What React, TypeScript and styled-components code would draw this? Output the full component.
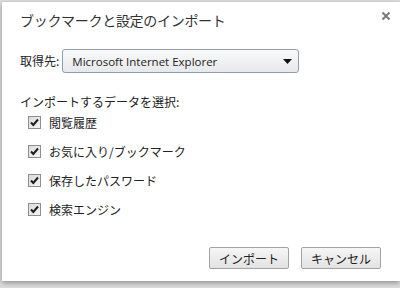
import React from 'react';
import styled, { createGlobalStyle } from 'styled-components';

const GlobalStyle = createGlobalStyle`
    html, body {
        margin: 0;
        padding: 0;
        width: 400px;
        height: 288px;
        overflow: hidden;
        background: #dcdcdc;
    }
    body {
        font-family: "Noto Sans CJK JP", "Open Sans", sans-serif;
        color: #222;
    }
`;

const Dialog = styled.div`
    margin: 2px 0 0 2px;
    width: 398px;
    height: 279px;
    background: #fff;
    box-shadow: 0 2px 5px rgba(0, 0, 0, 0.35);
    display: flex;
    flex-direction: column;
    box-sizing: border-box;
`;

const Header = styled.div`
    display: flex;
    align-items: center;
    justify-content: space-between;
    height: 36px;
    padding: 0 9px 0 18px;
`;

const Title = styled.div`
    font-size: 14px;
    line-height: 18px;
    color: #333;
    letter-spacing: -0.3px;
`;

const CloseButton = styled.button`
    border: 0;
    background: none;
    padding: 0;
    width: 10px;
    height: 10px;
    margin-top: -9px;
    display: flex;
    align-items: center;
    justify-content: center;
    cursor: pointer;
`;

const Body = styled.div`
    flex: 1;
    padding: 0 18px;
`;

const SourceRow = styled.div`
    display: flex;
    align-items: center;
    margin-top: 11px;
    gap: 3px;
`;

const Label = styled.span`
    font-size: 12px;
    line-height: 16px;
    color: #222;
`;

const Select = styled.div`
    width: 237px;
    height: 24px;
    box-sizing: border-box;
    border: 1px solid #8f9eb0;
    border-radius: 3px;
    background: linear-gradient(#f9f9f9, #e6e9ec);
    display: flex;
    align-items: center;
    justify-content: space-between;
    padding: 0 6px 0 9px;
    font-family: "Open Sans", "Liberation Sans", sans-serif;
    font-size: 11.5px;
    color: #222;
`;

const SectionLabel = styled.div`
    font-size: 12px;
    line-height: 12px;
    margin-top: 23px;
`;

const CheckList = styled.div`
    display: flex;
    flex-direction: column;
    padding-left: 8px;
`;

const CheckRow = styled.label`
    display: flex;
    align-items: center;
    height: 29px;
    gap: 8px;
    font-size: 12px;
`;

const Box = styled.span`
    width: 13px;
    height: 13px;
    box-sizing: border-box;
    border: 1px solid #8e8e8e;
    background: linear-gradient(135deg, #dcdcdc, #f4f4f4);
    display: flex;
    align-items: center;
    justify-content: center;
`;

const Footer = styled.div`
    display: flex;
    justify-content: flex-end;
    gap: 12px;
    padding: 0 19px 12px 0;
`;

const Button = styled.button`
    width: 80px;
    height: 22px;
    box-sizing: border-box;
    border: 1px solid #a3a3a3;
    border-radius: 2px;
    background: linear-gradient(#f6f6f6, #e2e2e2);
    font-family: "Noto Sans CJK JP", sans-serif;
    font-size: 12px;
    color: #222;
    padding: 0;
    cursor: pointer;
`;

const items = ['閲覧履歴', 'お気に入り/ブックマーク', '保存したパスワード', '検索エンジン'];

const Check: React.FC = () => (
    <Box>
        <svg width="11" height="11" viewBox="0 0 11 11">
            <path d="M2 5.5 L4.3 8 L9 2.5" fill="none" stroke="#1e1e1e" strokeWidth="2" />
        </svg>
    </Box>
);

const App: React.FC = () => {
    return (
        <>
            <GlobalStyle />
            <Dialog>
                <Header>
                    <Title>ブックマークと設定のインポート</Title>
                    <CloseButton aria-label="閉じる">
                        <svg width="10" height="10" viewBox="0 0 10 10">
                            <path d="M1.5 1.5 L8.5 8.5 M8.5 1.5 L1.5 8.5" stroke="#7a7a7a" strokeWidth="2" />
                        </svg>
                    </CloseButton>
                </Header>
                <Body>
                    <SourceRow>
                        <Label>取得先:</Label>
                        <Select>
                            <span>Microsoft Internet Explorer</span>
                            <svg width="9" height="5" viewBox="0 0 9 5">
                                <path d="M0 0 H9 L4.5 5 Z" fill="#111" />
                            </svg>
                        </Select>
                    </SourceRow>
                    <SectionLabel>インポートするデータを選択:</SectionLabel>
                    <CheckList>
                        {items.map((item) => (
                            <CheckRow key={item}>
                                <Check />
                                {item}
                            </CheckRow>
                        ))}
                    </CheckList>
                </Body>
                <Footer>
                    <Button>インポート</Button>
                    <Button>キャンセル</Button>
                </Footer>
            </Dialog>
        </>
    );
};

export default App;
